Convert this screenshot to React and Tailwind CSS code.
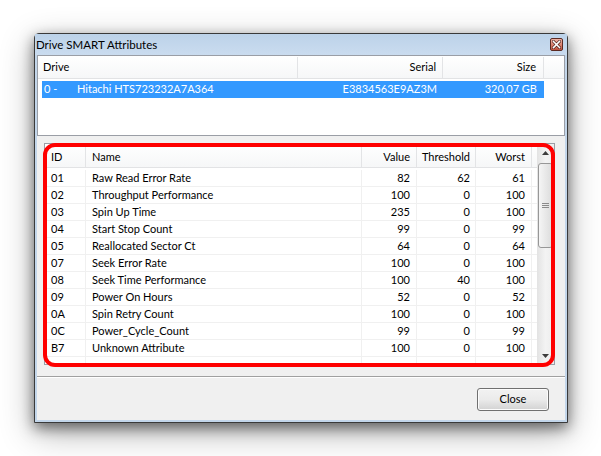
import React from 'react';

const drive = { num: '0 -', model: 'Hitachi HTS723232A7A364', serial: 'E3834563E9AZ3M', size: '320,07 GB' };

const attrs = [
  ['01', 'Raw Read Error Rate', 82, 62, 61],
  ['02', 'Throughput Performance', 100, 0, 100],
  ['03', 'Spin Up Time', 235, 0, 100],
  ['04', 'Start Stop Count', 99, 0, 99],
  ['05', 'Reallocated Sector Ct', 64, 0, 64],
  ['07', 'Seek Error Rate', 100, 0, 100],
  ['08', 'Seek Time Performance', 100, 40, 100],
  ['09', 'Power On Hours', 52, 0, 52],
  ['0A', 'Spin Retry Count', 100, 0, 100],
  ['0C', 'Power_Cycle_Count', 99, 0, 99],
  ['B7', 'Unknown Attribute', 100, 0, 100],
  ['', '', '', '', ''],
];

const CloseGlyph = () => (
  <div className="w-[13px] h-[13px] rounded-[2px] border border-[#5b2a22] bg-gradient-to-b from-[#efb3a6] to-[#c0523f] flex items-center justify-center">
    <svg width="9" height="9" viewBox="0 0 9 9">
      <path d="M1.5 1.5 L7.5 7.5 M7.5 1.5 L1.5 7.5" stroke="#4a1c16" strokeWidth="3" strokeLinecap="square" />
      <path d="M1.5 1.5 L7.5 7.5 M7.5 1.5 L1.5 7.5" stroke="#ffffff" strokeWidth="1.6" strokeLinecap="square" />
    </svg>
  </div>
);

const Scrollbar = () => (
  <div className="w-[17px] h-full bg-gradient-to-r from-[#e3e3e3] via-[#f3f3f3] to-[#ececec] flex flex-col">
    {/* up arrow */}
    <div className="h-[17px] flex items-center justify-center">
      <svg width="7" height="4" viewBox="0 0 7 4">
        <path d="M0 4 L3.5 0 L7 4 Z" fill="#3c3c3c" />
      </svg>
    </div>
    {/* thumb */}
    <div className="mt-[2px] mx-[1px] h-[85px] rounded-[3px] border border-[#979797] bg-gradient-to-r from-[#f5f5f5] to-[#dcdcdc] flex flex-col items-center justify-center gap-[1px]">
      <div className="w-[7px] h-[1px] bg-[#8a8a8a]" />
      <div className="w-[7px] h-[1px] bg-[#8a8a8a]" />
      <div className="w-[7px] h-[1px] bg-[#8a8a8a]" />
    </div>
    <div className="flex-1" />
    {/* down arrow */}
    <div className="h-[17px] flex items-center justify-center">
      <svg width="7" height="4" viewBox="0 0 7 4">
        <path d="M0 0 L7 0 L3.5 4 Z" fill="#3c3c3c" />
      </svg>
    </div>
  </div>
);

export default function App() {
  return (
    <div className="w-[601px] h-[456px] bg-white pl-[34px] pt-[33px] text-black" style={{ fontFamily: 'Lato, "Liberation Sans", sans-serif' }}>
      {/* Window */}
      <div className="w-[534px] h-[390px] border border-[#3a3a3a] rounded-t-[5px] bg-[#c3d6ea] flex flex-col shadow-[0_5px_14px_rgba(0,0,0,0.5),0_10px_34px_rgba(0,0,0,0.3)]">
        {/* Title bar */}
        <div className="h-[21px] flex items-center justify-between pl-[1px] pr-[4px] bg-gradient-to-b from-[#bcd2e9] to-[#cadcef]">
          <span className="text-[11.5px] leading-none">Drive SMART Attributes</span>
          <CloseGlyph />
        </div>

        {/* Client */}
        <div className="flex-1 mx-[2px] mb-[2px] bg-[#f0f0f0] flex flex-col">
          {/* Drive list */}
          <div className="h-[81px] border border-[#9a9ea6] bg-white text-[11px]">
            <div className="h-[23px] pt-[1px] flex border-b border-[#e2e3e5] bg-gradient-to-b from-white to-[#f6f7f8]">
              <div className="w-[260px] border-r border-[#e3e4e6] flex items-center pl-[5px]">Drive</div>
              <div className="w-[145px] border-r border-[#e3e4e6] flex items-center justify-end pr-[6px]">Serial</div>
              <div className="w-[101px] border-r border-[#e3e4e6] flex items-center justify-end pr-[7px]">Size</div>
              <div className="flex-1" />
            </div>
            <div className="mt-[2px] ml-[4px] w-[502px] h-[17px] bg-[#3399ff] text-white flex items-center">
              <span className="w-[35px] pl-[2px]">{drive.num}</span>
              <span className="w-[221px]">{drive.model}</span>
              <span className="w-[145px] text-right pr-[6px]">{drive.serial}</span>
              <span className="w-[101px] text-right pr-[7px]">{drive.size}</span>
            </div>
          </div>

          {/* SMART list */}
          <div className="relative mt-[7px] ml-[7px] w-[511px] h-[222px] border border-[#9a9ea6] bg-white text-[11px] flex">
            <div className="w-[492px] flex flex-col overflow-hidden">
              <div className="h-[24px] shrink-0 pt-[3px] flex border-b border-[#e2e3e5] bg-gradient-to-b from-white to-[#f6f7f8]">
                <div className="w-[41px] border-r border-[#e3e4e6] flex items-center pl-[6px]">ID</div>
                <div className="w-[276px] border-r border-[#e3e4e6] flex items-center pl-[6px]">Name</div>
                <div className="w-[55px] border-r border-[#e3e4e6] flex items-center justify-end pr-[6px]">Value</div>
                <div className="w-[59px] border-r border-[#e3e4e6] flex items-center justify-end pr-[5px]">Threshold</div>
                <div className="w-[56px] border-r border-[#e3e4e6] flex items-center justify-end pr-[6px]">Worst</div>
                <div className="flex-1" />
              </div>
              <div className="mt-[2px]">
                {attrs.map((a, i) => (
                  <div key={i} className="h-[17px] flex border-b border-[#f0f0f0]">
                    <div className="w-[41px] border-r border-[#f0f0f0] flex items-center pl-[6px]">{a[0]}</div>
                    <div className="w-[276px] border-r border-[#f0f0f0] flex items-center pl-[6px]">{a[1]}</div>
                    <div className="w-[55px] border-r border-[#f0f0f0] flex items-center justify-end pr-[6px]">{a[2]}</div>
                    <div className="w-[59px] border-r border-[#f0f0f0] flex items-center justify-end pr-[5px]">{a[3]}</div>
                    <div className="w-[56px] border-r border-[#f0f0f0] flex items-center justify-end pr-[6px]">{a[4]}</div>
                    <div className="flex-1" />
                  </div>
                ))}
              </div>
            </div>
            <Scrollbar />
            {/* red highlight */}
            <div className="absolute -left-[2px] -top-[1px] w-[512px] h-[224px] border-[4px] border-[#ff0000] rounded-[12px] pointer-events-none" />
          </div>

          {/* Separator */}
          <div className="mt-[11px] border-t border-[#a0a0a0] bg-[#f0f0f0]">
            <div className="h-[1px] bg-white" />
          </div>

          {/* Buttons */}
          <div className="flex justify-end pr-[16px] mt-[10px]">
            <button className="w-[72px] h-[23px] rounded-[3px] border border-[#707070] bg-gradient-to-b from-[#f2f2f2] via-[#ebebeb] to-[#d2d2d2] text-[11px] shadow-[inset_0_0_0_1px_#fcfcfc]">
              Close
            </button>
          </div>
        </div>
      </div>
    </div>
  );
}
